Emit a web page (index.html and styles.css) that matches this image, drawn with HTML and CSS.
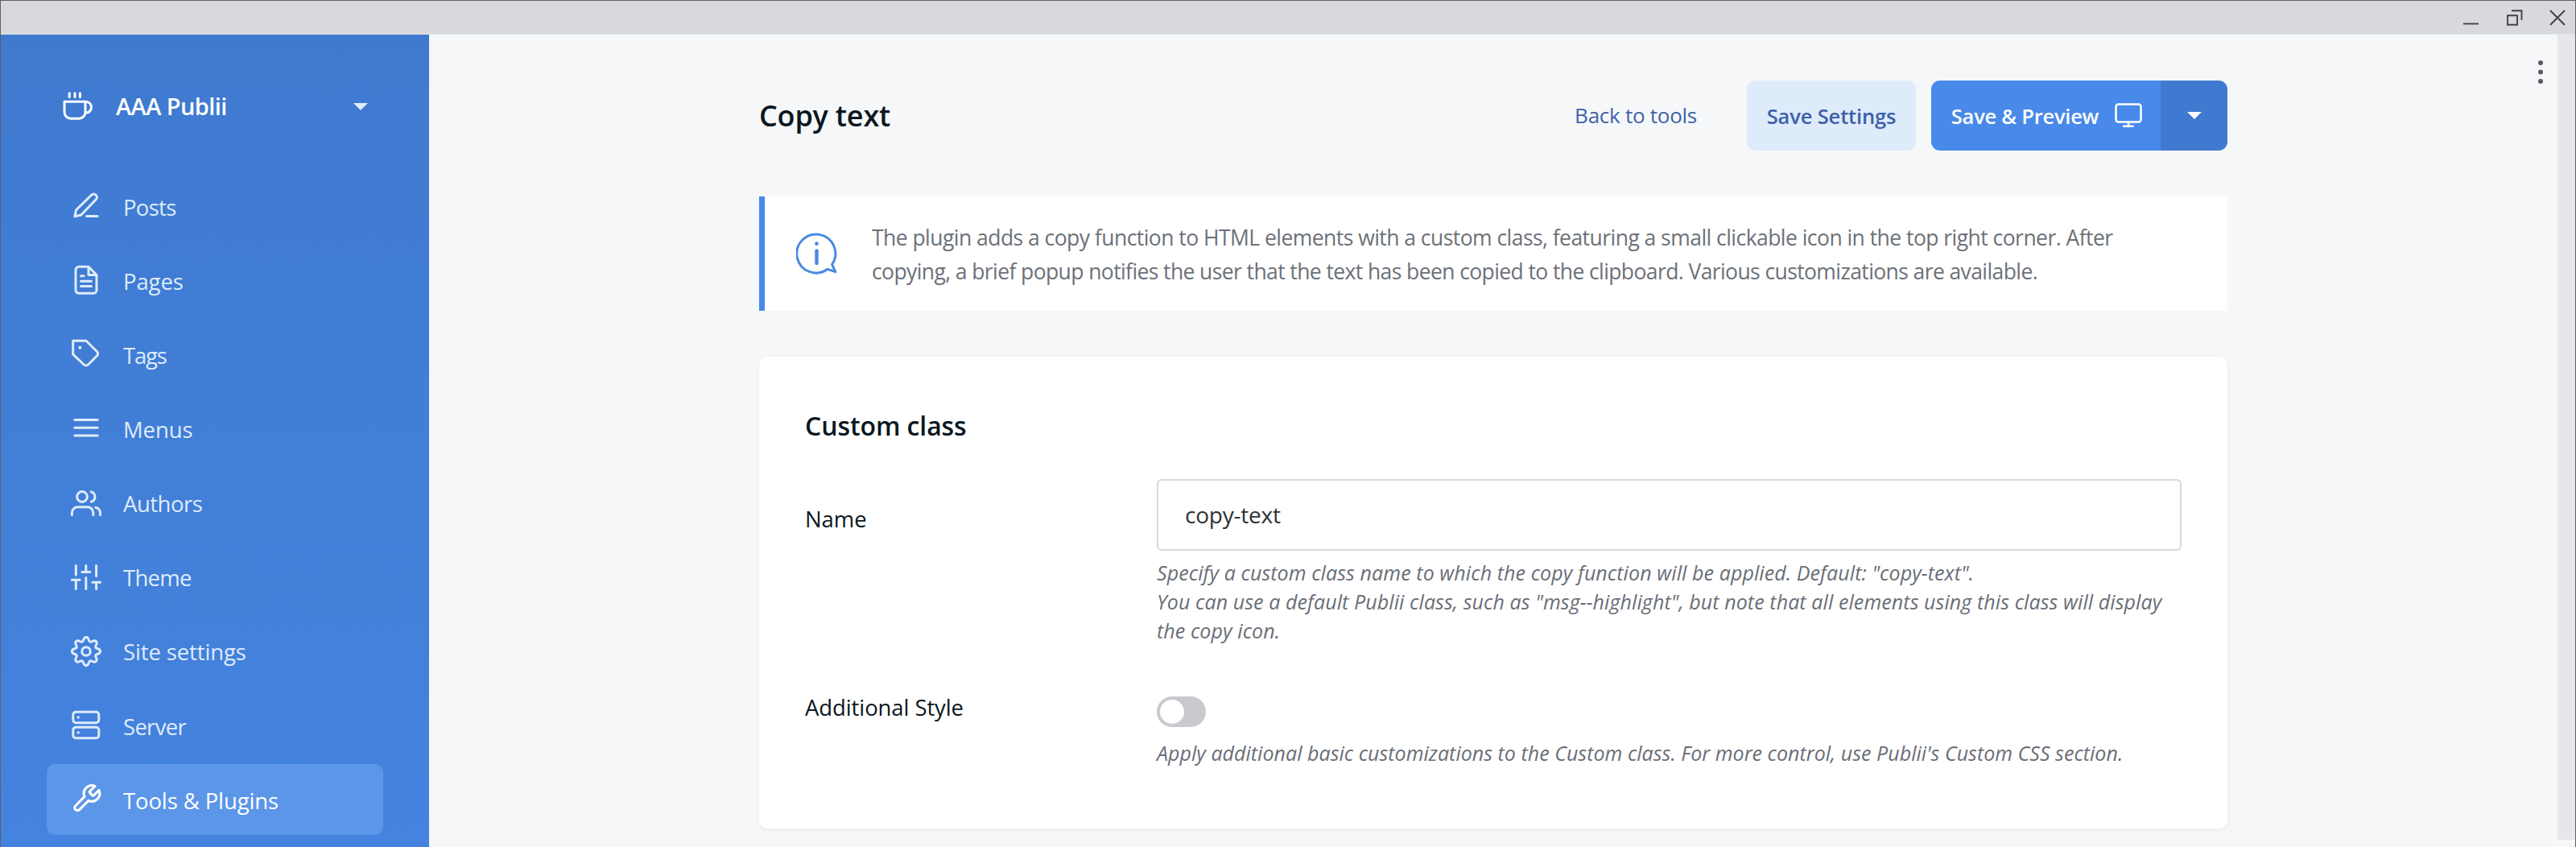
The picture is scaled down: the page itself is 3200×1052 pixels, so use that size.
FILE: index.html
```html
<!DOCTYPE html>
<html lang="en">
<head>
<meta charset="utf-8">
<title>Publii</title>
<link rel="stylesheet" href="styles.css">
</head>
<body>
<div class="window">
  <div class="titlebar">
    <svg class="win-icon" viewBox="0 0 20 20"><path d="M0 17.5H19"/></svg>
    <svg class="win-icon" viewBox="0 0 20 20"><path d="M1 7.2H13V18.8H1zM6 1.2H18.5V13"/></svg>
    <svg class="win-icon" viewBox="0 0 20 20"><path d="M1 1L19 19M19 1L1 19"/></svg>
  </div>
  <div class="body">
    <aside class="sidebar">
      <div class="site">
        <svg class="icon" viewBox="0 0 40 40"><path d="M9.2 4.7v4.8M16 4.7v4.8M22.4 4.7v4.8M3 15.2h26v13a8 8 0 0 1-8 8H11a8 8 0 0 1-8-8zM29 15.2h.7a6.8 7 0 0 1 0 14H29"/></svg>
        <span class="site-name">AAA Publii</span>
        <svg class="caret" viewBox="0 0 18 9"><path d="M0 0H18L9 9z"/></svg>
      </div>
      <nav class="nav">
        <a class="nav-item nav-tight"><svg class="icon" viewBox="0 0 40 40"><path d="M5.8 32.8l1.8-8L26.6 6.2a3.9 3.9 0 0 1 5.6 5.6L13.8 31zM20.5 32.4H34"/></svg><span class="nav-label">Posts</span></a>
        <a class="nav-item"><svg class="icon" viewBox="0 0 40 40"><path d="M23 3.3H11a4 4 0 0 0-4 4v25a4 4 0 0 0 4 4h18a4 4 0 0 0 4-4V13.5zM23 3.3v10.2h10M13.5 14.8h3.5M13.5 21.2h13M13.5 27.5h13"/></svg><span class="nav-label">Pages</span></a>
        <a class="nav-item nav-tags"><svg class="icon" viewBox="0 0 40 40"><path d="M3.7 3.3H20L33.6 16.8a4 4 0 0 1 0 5L22.4 33a3.6 3.6 0 0 1-5 0L3.7 20.2z"/><circle class="dot" cx="12.3" cy="11.7" r="2"/></svg><span class="nav-label">Tags</span></a>
        <a class="nav-item"><svg class="icon" viewBox="0 0 40 40"><path d="M5.8 9.6H34.2M5.8 19.2H34.2M5.8 28.9H34.2"/></svg><span class="nav-label">Menus</span></a>
        <a class="nav-item nav-authors"><svg class="icon" viewBox="0 0 40 40"><circle cx="15" cy="12" r="6.4"/><path d="M2.4 34.5v-2.7a7 7 0 0 1 7-7h12.4a7 7 0 0 1 7 7v2.7M26.3 5.9a6.4 6.4 0 0 1 0 12.3M31.7 25.2a7 7 0 0 1 5.8 6.8v2.5"/></svg><span class="nav-label">Authors</span></a>
        <a class="nav-item nav-tight"><svg class="icon" viewBox="0 0 40 40"><path d="M7.3 5.5V17M2.4 23.3h9.8M7.3 23.3v11.2M19.8 5.5v8M15 13.6h9.8M19.8 20.5v14M32.6 5.5v13M27.8 26.3h9.8M32.6 26.3v8.2"/></svg><span class="nav-label">Theme</span></a>
        <a class="nav-item"><svg class="icon" viewBox="0 0 40 40"><defs><path id="cog" d="M20 2.4C24 2.4 22.5 7.2 24.9 8.2S29.6 4.7 32.4 7.6S30.8 12.7 31.8 15.1S37.6 16 37.6 20"/></defs><use href="#cog"/><use href="#cog" transform="rotate(90 20 20)"/><use href="#cog" transform="rotate(180 20 20)"/><use href="#cog" transform="rotate(270 20 20)"/><circle cx="20" cy="20" r="5.3"/></svg><span class="nav-label">Site settings</span></a>
        <a class="nav-item nav-tight"><svg class="icon" viewBox="0 0 40 40"><rect x="3.8" y="3.3" width="32" height="13.4" rx="3.5"/><rect x="3.8" y="22.3" width="32" height="13.4" rx="3.5"/><circle class="dot" cx="10.2" cy="9.9" r="1.7"/><circle class="dot" cx="10.2" cy="28.9" r="1.7"/></svg><span class="nav-label">Server</span></a>
        <a class="nav-item nav-active"><svg class="icon" viewBox="0 0 40 40"><path class="wrench" transform="translate(.9 -.6) scale(1.63)" d="M14.7 6.3a1 1 0 0 0 0 1.4l1.6 1.6a1 1 0 0 0 1.4 0l3.77-3.77a6 6 0 0 1-7.94 7.94l-6.91 6.91a2.12 2.12 0 0 1-3-3l6.91-6.91a6 6 0 0 1 7.94-7.94l-3.76 3.76z"/></svg><span class="nav-label">Tools &amp; Plugins</span></a>
      </nav>
    </aside>
    <main class="main">
      <div class="content">
        <header class="header">
          <h1 class="title">Copy text</h1>
          <a class="back">Back to tools</a>
          <button class="btn btn-light">Save Settings</button>
          <div class="split">
            <button class="btn btn-primary"><span>Save &amp; Preview</span>
              <svg class="monitor" viewBox="0 0 34 31"><rect x="1.5" y="1.5" width="31" height="22" rx="3"/><path d="M17 24v5M11 28.7h11.5"/></svg>
            </button>
            <button class="btn btn-drop"><svg class="caret" viewBox="0 0 18 9"><path d="M0 0H18L9 9z"/></svg></button>
          </div>
        </header>
        <section class="notice">
          <svg class="info" viewBox="0 0 52 52"><path d="M44.6 39.5A24 24 0 1 0 39 45.3L48.8 48.7z"/><circle class="info-dot" cx="25.5" cy="13.6" r="2.4"/><path class="info-stem" d="M25.5 22.5V38"/></svg>
          <p class="notice-text">The plugin adds a copy function to HTML elements with a custom class, featuring a small clickable icon in the top right corner. After<br><span class="notice-end">copying, a brief popup notifies the user that the text has been copied to the clipboard. Various customizations are available.</span></p>
        </section>
        <section class="card">
          <h2 class="card-title">Custom class</h2>
          <div class="field">
            <label class="label label-input">Name</label>
            <div class="control">
              <div class="input">copy-text</div>
              <p class="help">Specify a custom class name to which the copy function will be applied. Default: "copy-text".<br>You can use a default Publii class, such as "msg--highlight", but note that all elements using this class will display<br>the copy icon.</p>
            </div>
          </div>
          <div class="field field-switch">
            <label class="label label-switch">Additional Style</label>
            <div class="control">
              <div class="switch"><span class="knob"></span></div>
              <p class="help help-switch">Apply additional basic customizations to the Custom class. For more control, use Publii's Custom CSS section.</p>
            </div>
          </div>
        </section>
      </div>
      <svg class="kebab" viewBox="0 0 6 30"><circle cx="3" cy="3" r="3"/><circle cx="3" cy="14.6" r="3"/><circle cx="3" cy="26" r="3"/></svg>
      <div class="scrollbar"></div>
    </main>
  </div>
</div>
</body>
</html>
```
FILE: styles.css
```css
* { box-sizing: border-box; }
body {
  margin: 0;
  font-family: "Open Sans", "Noto Sans", sans-serif;
  font-size: 28px;
  color: #0b1720;
}
h1, h2, p { margin: 0; }
button { font: inherit; border: 0; margin: 0; }
.window {
  height: 1052px;
  border: solid #606068;
  border-width: 1px 1px 0;
  display: flex;
  flex-direction: column;
  overflow: hidden;
}
.titlebar {
  height: 42px;
  flex: none;
  background: #d8d9dd;
  border-bottom: 1px solid #dfe3e9;
  display: flex;
  justify-content: flex-end;
  align-items: center;
  gap: 33.5px;
  padding-right: 12px;
}
.win-icon { width: 20px; height: 20px; fill: none; stroke: #414147; stroke-width: 1.9; }
.body { flex: 1; display: flex; min-height: 0; }

.sidebar {
  width: 532px;
  flex: none;
  background: linear-gradient(#3f7acf, #4483df);
  color: #dfebfb;
}
.icon {
  width: 40px;
  height: 40px;
  flex: none;
  fill: none;
  stroke: currentColor;
  stroke-width: 3;
  stroke-linecap: round;
  stroke-linejoin: round;
}
.dot { fill: currentColor; stroke: none; }
.caret { width: 18px; height: 9px; fill: currentColor; }
.site {
  display: flex;
  align-items: center;
  height: 48px;
  margin: 64px 76px 0 76px;
  color: #fff;
}
.site-name {
  flex: 1;
  margin-left: 27px;
  padding-top: 1px;
  font-size: 29px;
  font-weight: 600;
  letter-spacing: -.6px;
}
.site .caret { color: #dfebfb; margin-top: 2px; }
.nav {
  margin: 57px 57px 0;
  display: flex;
  flex-direction: column;
  gap: 4.16px;
}
.nav-item {
  height: 88px;
  flex: none;
  display: flex;
  align-items: center;
  gap: 26px;
  padding-left: 29px;
  border-radius: 10px;
  font-size: 27.5px;
  letter-spacing: -.12px;
}
.nav-label { padding-top: 2px; }
.nav-tight { letter-spacing: -.7px; }
.nav-authors { letter-spacing: -.5px; }
.nav-tags { letter-spacing: -1.2px; }
.nav-active { background: #5b96e8; color: #fff; }
.wrench { stroke-width: 1.9; }

.main {
  flex: 1;
  display: flex;
  align-items: flex-start;
  background: #f6f7f9;
}
.content { width: 1824px; margin-left: 410px; }
.header {
  margin-top: 57px;
  height: 87px;
  display: flex;
  align-items: center;
}
.title {
  flex: 1;
  font-size: 36px;
  font-weight: 600;
  letter-spacing: -.2px;
  line-height: 48px;
}
.back { font-size: 26px; letter-spacing: -.26px; color: #3f63ab; margin: -1px 62px 0 0; }
.btn {
  height: 87px;
  display: flex;
  align-items: center;
  justify-content: center;
  padding: 0;
  font-size: 25.5px;
  font-weight: 600;
  letter-spacing: -.15px;
  white-space: nowrap;
}
.btn-light { width: 210px; margin-right: 19px; border-radius: 11px; background: #deebfa; color: #3c5fa8; }
.split { display: flex; width: 368px; border-radius: 11px; overflow: hidden; color: #fff; }
.btn-primary { width: 285px; gap: 20px; padding-left: 2px; background: #4889e9; color: #fff; letter-spacing: -.25px; }
.btn-drop { flex: 1; background: #407ad0; color: #fff; }
.monitor {
  width: 34px;
  height: 31px;
  fill: none;
  stroke: currentColor;
  stroke-width: 2.6;
  stroke-linecap: round;
}

.notice {
  margin-top: 57px;
  height: 142px;
  display: flex;
  align-items: center;
  background: #fff;
  border-left: 7px solid #4889e9;
  padding-left: 39px;
}
.info {
  width: 52px;
  height: 52px;
  flex: none;
  fill: none;
  stroke: #4889e2;
  stroke-width: 3;
  stroke-linejoin: round;
  stroke-linecap: round;
}
.info-dot { fill: #4889e2; stroke: none; }
.info-stem { stroke-width: 4.4; }
.notice-text {
  margin-left: 42px;
  padding-top: 3px;
  font-size: 26.5px;
  line-height: 41.5px;
  letter-spacing: -.54px;
  color: #6c7178;
  white-space: nowrap;
}
.notice-end { letter-spacing: -.6px; }

.card {
  margin-top: 57px;
  height: 586px;
  padding: 66px 57px 0;
  background: #fff;
  border-radius: 11px;
  box-shadow: 0 2px 6px rgba(30, 40, 60, .06);
}
.card-title { font-size: 32px; font-weight: 600; line-height: 40px; letter-spacing: -.1px; }
.field { display: flex; margin-top: 46px; }
.field-switch { margin-top: 64px; }
.label { width: 437px; flex: none; line-height: 40px; font-size: 27.5px; letter-spacing: -.1px; }
.label-input { margin-top: 30px; }
.label-switch { margin-top: -6px; }
.control { flex: 1; }
.input {
  height: 89px;
  padding: 0 33px 2px;
  display: flex;
  align-items: center;
  border: 2px solid #d7d8da;
  border-radius: 6px;
  color: #2f3236;
  letter-spacing: -.22px;
}
.help {
  margin-top: 9px;
  font-size: 25px;
  font-style: italic;
  line-height: 36px;
  letter-spacing: .09px;
  color: #696e76;
  white-space: nowrap;
}
.help-switch { margin-top: 14px; letter-spacing: .03px; }
.switch { width: 61px; height: 38px; border-radius: 19px; background: #c9cace; padding: 4px; }
.knob { display: block; width: 30px; height: 30px; border-radius: 50%; background: #fff; }

.kebab { width: 6px; height: 30px; fill: #5b5b62; margin: 32px 18px 0 auto; }
.scrollbar { width: 22px; height: 1000px; background: #e6e7e9; }
```
